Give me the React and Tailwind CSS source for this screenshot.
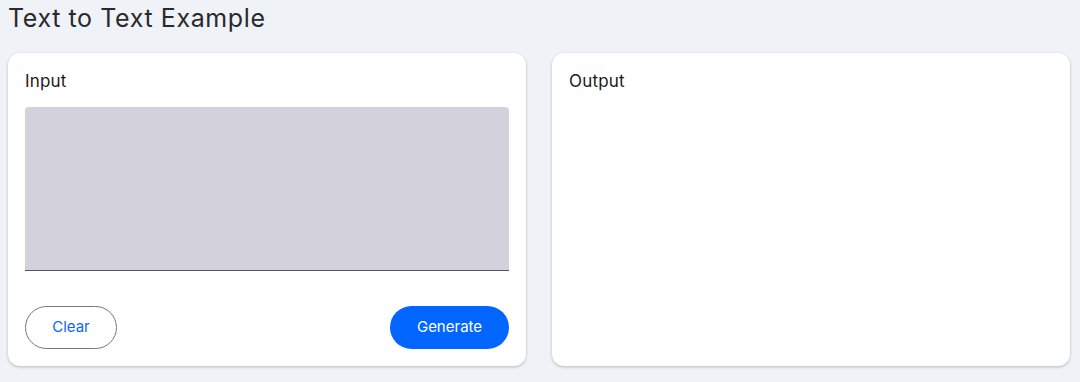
export default function App() {
  return (
    <div className="min-h-screen bg-[#eff2f7] px-2 pt-[3px] pb-4 text-[#222]" style={{ fontFamily: 'Inter, "Noto Sans", sans-serif' }}>
      <h1 className="text-[25px] leading-[31px] font-normal tracking-[0.6px] text-[#2a2a2a]">Text to Text Example</h1>
      <div className="mt-[19px] flex gap-[26px] pr-[2px]">
        {/* Input card */}
        <div className="w-[518px] h-[313px] bg-white rounded-[12px] shadow-[0_1px_3px_rgba(0,0,0,0.25)] px-[17px] pt-[17px] flex flex-col">
          <h2 className="text-[17px] leading-[22px] tracking-[0.2px] text-[#1a1a1a]">Input</h2>
          <textarea className="mt-[15px] h-[164px] w-full resize-none bg-[#d3d1dc] rounded-t-[4px] border-b border-[#55535d] outline-none p-2" />
          <div className="mt-[35px] flex justify-between">
            <button className="w-[92px] h-[43px] rounded-full border border-[#77757d] text-[#0a66ff] text-[15px]">Clear</button>
            <button className="w-[119px] h-[43px] rounded-full bg-[#0066ff] text-white text-[15px]">Generate</button>
          </div>
        </div>
        {/* Output card */}
        <div className="w-[518px] h-[313px] bg-white rounded-[12px] shadow-[0_1px_3px_rgba(0,0,0,0.25)] px-[17px] pt-[17px]">
          <h2 className="text-[17px] leading-[22px] tracking-[0.2px] text-[#1a1a1a]">Output</h2>
        </div>
      </div>
    </div>
  )
}
